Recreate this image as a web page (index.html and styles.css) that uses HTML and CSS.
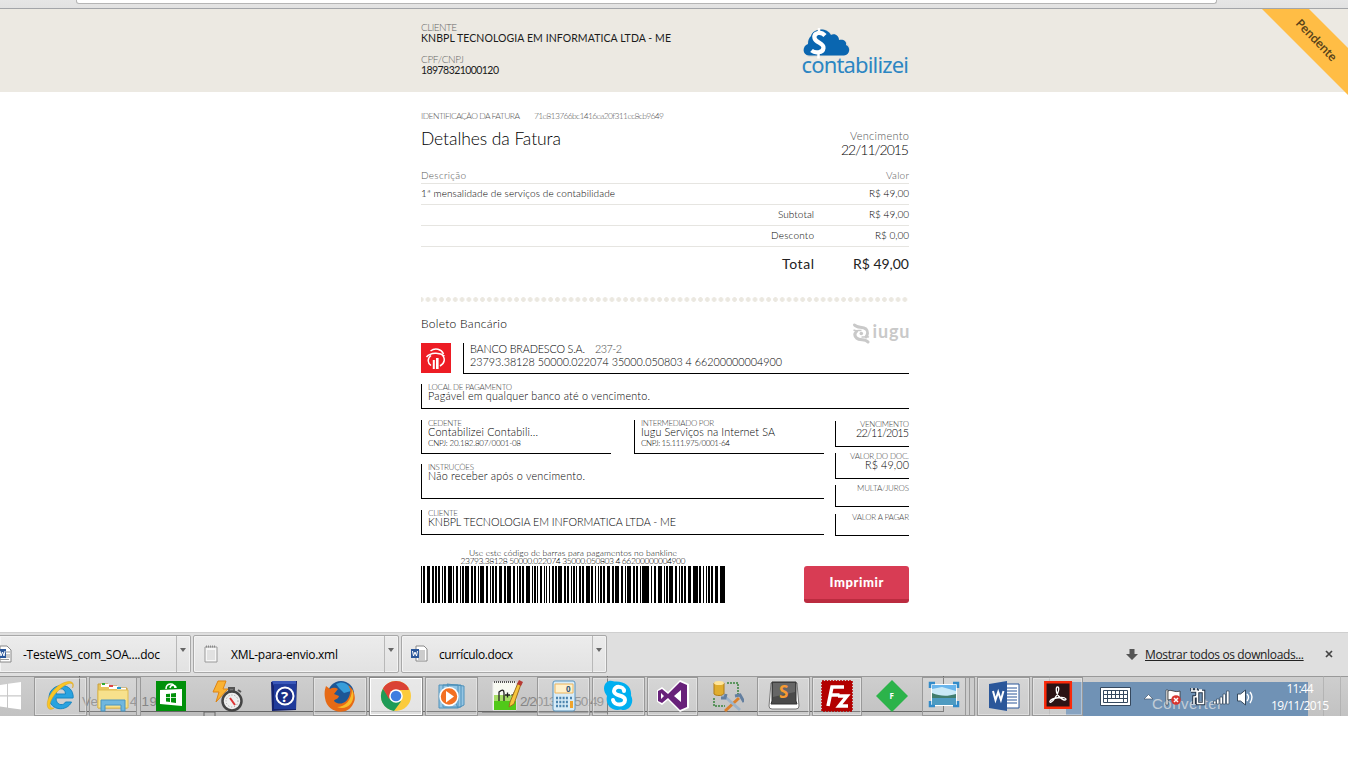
FILE: index.html
```html
<!DOCTYPE html>
<html lang="pt-BR">
<head>
<meta charset="utf-8">
<title>Fatura</title>
<link rel="stylesheet" href="styles.css">
</head>
<body>
<div class="screen">
  <div class="chrome-top"><div class="address"></div></div>

  <header class="head">
    <div class="col head-row">
      <div>
        <div class="line11 lab"><span class="fit" data-w="36">CLIENTE</span></div>
        <div class="line11 val"><span class="fit" data-w="250">KNBPL TECNOLOGIA EM INFORMATICA LTDA - ME</span></div>
        <div class="line11 lab gap"><span class="fit" data-w="43">CPF/CNPJ</span></div>
        <div class="line11 val"><span class="fit" data-w="78">18978321000120</span></div>
      </div>
      <svg class="brand" width="112" height="54" viewBox="800 25 112 54">
        <path d="M809 57a6 6 0 0 1-1-11a9 8 0 0 1 3-9c2-9 15-11 20-3c4-1 8 2 8 6c5-1 8 1 8 4c4 2 4 10-2 11z" fill="#cfcfcb" opacity=".6"/>
        <path d="M809 55.500C802 55 802 46 808 44C808 40 809 38 811 36C813 28 827 27 831 35C835 33 839 36 839 40C843 39 847 41 846 45C851 47 850 55 844 55.500Z" fill="#0a66b0"/>
        <path d="M825 35.500C821 31 813.500 32.500 814.500 38C815.500 43 824 42.500 823.500 48C823 53 815 53.500 811.500 50.500" fill="none" stroke="#fff" stroke-width="4.200"/>
        <path d="M819 28v5M818.500 52v6.500" stroke="#fff" stroke-width="2.500"/>
        <text x="801.500" y="73" textLength="107.500" class="brandname">contabilizei</text>
      </svg>
    </div>
    <svg class="ribbon" width="90" height="88" viewBox="1260 9 90 88">
      <path d="M1262 9H1309L1348 48V95Z" fill="#ffbd45"/>
      <text x="0" y="0" textLength="53" transform="translate(1295 24) rotate(46)" class="ribtext">Pendente</text>
    </svg>
  </header>

  <main class="col">
    <div class="ident"><span class="fit" data-w="99">IDENTIFICAÇÃO DA FATURA</span><span class="fit" data-w="130">71e813766bc1416ea20f311ec8cb9649</span></div>
    <div class="title-row">
      <h1><span class="fit" data-w="140">Detalhes da Fatura</span></h1>
      <div class="due"><div class="muted"><span class="fit" data-w="59">Vencimento</span></div><div class="due-date"><span class="fit" data-w="68">22/11/2015</span></div></div>
    </div>

    <div class="items">
      <div class="row first muted"><span class="fit" data-w="45">Descrição</span><b></b><span class="fit" data-w="23">Valor</span></div>
      <div class="row"><span class="fit" data-w="194">1ª mensalidade de serviços de contabilidade</span><b></b><span class="fit" data-w="40">R$ 49,00</span></div>
      <div class="row"><span></span><b><span class="fit" data-w="36">Subtotal</span></b><span class="fit" data-w="40">R$ 49,00</span></div>
      <div class="row"><span></span><b><span class="fit" data-w="43">Desconto</span></b><span class="fit" data-w="34">R$ 0,00</span></div>
      <div class="row total"><span></span><b><span class="fit" data-w="32">Total</span></b><span class="fit" data-w="56">R$ 49,00</span></div>
    </div>
    <div class="dots"></div>

    <div class="slip-head">
      <span class="fit" data-w="86">Boleto Bancário</span>
      <svg width="60" height="24" viewBox="852 320 60 24">
        <g fill="none" stroke="#c9c9c9" stroke-width="3" stroke-linecap="round"><path d="M854.500 324c3 3.500 8 1 11.500 4c2.500 2.500 1.500 6 0 8"/><path d="M868 341c-3-3.500-8-1-11.500-4c-2.500-2.500-1.500-5 0-6.500"/></g>
        <path d="M853.500 329c3 1.500 6 0 8 .5M869 336c-3-1-5 .5-7.500 0" fill="none" stroke="#c9c9c9" stroke-width="1.500"/>
        <circle cx="861.300" cy="332.500" r="1.800" fill="#c9c9c9"/>
        <text x="872.500" y="337" textLength="37" class="iugu">iugu</text>
      </svg>
    </div>

    <div class="bank-row">
      <svg width="30" height="30" viewBox="0 0 30 30"><path fill="#ed1c24" d="M0 0h30v30H0z"/><path d="M9.500 8C14 4.500 20.500 6 22.500 11M5.500 14c4-4.500 13-5 18-1M20 11c5 4 4 9-1 12M10 12.500C6 15.500 6.500 20 10 22.500" fill="none" stroke="#fff" stroke-width="1.500"/><path d="M11.800 17h2v9h-2zM15 15h2.600v11H15z" fill="#fff"/></svg>
      <div class="box bank">
        <div class="t bl"><span class="fit" data-w="115">BANCO BRADESCO S.A.</span><span class="fit grey" data-w="27">237-2</span></div>
        <div class="t bl"><span class="fit" data-w="312">23793.38128 50000.022074 35000.050803 4 66200000004900</span></div>
      </div>
    </div>

    <div class="box place"><div class="l"><span class="fit" data-w="84">LOCAL DE PAGAMENTO</span></div><div class="t"><span class="fit" data-w="222">Pagável em qualquer banco até o vencimento.</span></div></div>

    <div class="slip">
      <div class="slip-left">
        <div class="pair">
          <div class="box"><div class="l"><span class="fit" data-w="34">CEDENTE</span></div><div class="t"><span class="fit" data-w="110">Contabilizei Contabili...</span></div><div class="s"><span class="fit" data-w="93">CNPJ: 20.182.807/0001-08</span></div></div>
          <div class="box"><div class="l"><span class="fit" data-w="73">INTERMEDIADO POR</span></div><div class="t"><span class="fit" data-w="134">Iugu Serviços na Internet SA</span></div><div class="s"><span class="fit" data-w="89">CNPJ: 15.111.975/0001-64</span></div></div>
        </div>
        <div class="box instr"><div class="l"><span class="fit" data-w="46">INSTRUÇÕES</span></div><div class="t"><span class="fit" data-w="157">Não receber após o vencimento.</span></div></div>
        <div class="box client"><div class="l"><span class="fit" data-w="30">CLIENTE</span></div><div class="t"><span class="fit" data-w="248">KNBPL TECNOLOGIA EM INFORMATICA LTDA - ME</span></div></div>
      </div>
      <div class="slip-right">
        <div class="box r"><div class="l"><span class="fit" data-w="49">VENCIMENTO</span></div><div class="t"><span class="fit" data-w="53">22/11/2015</span></div></div>
        <div class="box r"><div class="l"><span class="fit" data-w="59">VALOR DO DOC.</span></div><div class="t"><span class="fit" data-w="44">R$ 49,00</span></div></div>
        <div class="box r low"><div class="l"><span class="fit" data-w="52">MULTA/JUROS</span></div></div>
        <div class="box r low2"><div class="l"><span class="fit" data-w="57">VALOR A PAGAR</span></div></div>
      </div>
    </div>

    <div class="pay">
      <div class="bars">
        <div class="cap"><span class="fit" data-w="208">Use este código de barras para pagamentos no bankline</span></div>
        <div class="cap"><span class="fit" data-w="225">23793.38128 50000.022074 35000.050803 4 66200000004900</span></div>
        <svg id="barcode" width="304" height="37" shape-rendering="crispEdges"></svg>
      </div>
      <button class="print"><span class="fit" data-w="54">Imprimir</span></button>
    </div>
  </main>

  <div class="downloads">
    <div class="dl d1"><svg width="12" height="18" viewBox="0 0 12 18"><path d="M0 1h7l4 4v12H0z" fill="#fff" stroke="#888"/><path d="M5 7h5M5 10h5M5 12h5M0 14.500h9" stroke="#999"/><path fill="#2b579a" d="M0 4h6v9H0z"/><path d="M0 6l1 5l1.500-4l1.500 4l1-5" stroke="#fff" fill="none"/></svg><span class="fit" data-w="137">-TesteWS_com_SOA....doc</span><i></i></div>
    <div class="dl d2"><svg width="14" height="18" viewBox="0 0 14 18"><path d="M1 2h12v15H1z" fill="#f6f6f6" stroke="#999"/><path d="M2 1.500h10" stroke="#888" stroke-dasharray="1 1" stroke-width="2"/><path d="M3 6h8M3 8h8M3 10h8M3 12h8M3 14h8" stroke="#ccc"/></svg><span class="fit" data-w="107">XML-para-envio.xml</span><i></i></div>
    <div class="dl d3"><svg width="17" height="18" viewBox="0 0 17 18"><path d="M6 1h7l3 3v12H5V1z" fill="#fff" stroke="#888"/><path d="M8 6h6M8 8h6M8 10h6M8 12h6M7 14h7" stroke="#999"/><path fill="#2b579a" d="M0 4h8v9H0z"/><path d="M1.500 6l1 5l1.500-4l1.500 4l1-5" stroke="#fff" fill="none"/></svg><span class="fit" data-w="74">currículo.docx</span><i></i></div>
    <div class="dl-right"><svg width="12" height="13" viewBox="0 0 12 13"><path d="M3.500 1h5v5H12L6 12L0 6h3.500z" fill="#555"/></svg><a class="fit" data-w="159">Mostrar todos os downloads...</a><svg class="close" width="8" height="8" viewBox="0 0 8 8"><path d="M1 1l6 6M7 1L1 7" stroke="#444" stroke-width="1.700"/></svg></div>
  </div>

  <div class="taskbar">
    <svg class="ghost" width="1348" height="40" viewBox="0 676 1348 40">
      <path d="M79 712h529v4H79z" fill="#bdbdbd"/>
      <path d="M79.500 676v35M79 711.500H944M607.500 676v40M204 712h11v5h-11zM482 712h126M943.500 676v35" stroke="#666" fill="none"/>
      <path fill="#7092b5" d="M1066 682h242v34h-242z"/>
      <path d="M1049.500 676v40M1323.500 676v40M1340.500 676v40" stroke="#aaa" stroke-width=".7"/>
      <text x="82" y="706" textLength="75" class="gt">Ver. 11.4.19</text>
      <text x="520" y="706" textLength="84" class="gt">2/2013 10:50:49</text>
      <text x="1152" y="709" textLength="70" class="gc">Converter</text>
    </svg>
    <div class="cells">
      <div class="c"><svg class="win" viewBox="0 0 32 32"><path fill="#fff" d="M0 5l7-1V15.300H0zM8 3.800L21 2v13.300H8zM0 16.500h7v11L0 26.500zM8 16.500h13v13L8 27.700z"/></svg></div>
      <div class="c f"><svg viewBox="0 0 32 32"><path d="M26.500 22C22 32 5 31 4 18C4 3 26 1 28 15c.3 1 .1 3 .1 3H11c0 8 8 8 9.500 4zM11 14h9.500c0-7-9-7-9.500 0z" fill="#29a3e0" stroke="#1785c2" fill-rule="evenodd"/><path d="M27.500 8C32-2 16 0 7 12C-1 23 2 33 9 28c-7 1-4-8 2-15C19 4 30-1 27.500 8z" fill="#f9c627" stroke="#dba018" stroke-width=".5"/></svg></div>
      <div class="c f dbl"><svg viewBox="0 0 32 32"><path d="M1 5V4h10l1 2h8l1 2h9v20H1z" fill="#e8c55c" stroke="#c9a03f"/><path fill="#fff" d="M4 4h8v3H4zm8 2h9v3h-9zm8 2h9v3h-9z"/><path d="M5 3h3v2H5z" fill="#3a3"/><path d="M12 5h4v2h-4z" fill="#d44"/><path d="M20 7h4v2h-4z" fill="#29c"/><path fill="#f7e18c" stroke="#dfbb50" d="M1 10h30v18H1z"/><path fill="#70b7de" stroke="#4b94c0" d="M4 31V20h24v11h-4v-6H8v6z"/></svg></div>
      <div class="c"><svg viewBox="0 0 32 32"><path fill="#00900a" d="M1 1h30v30H1z"/><path fill="#fff" d="M5 10l22-1v17L5 24z"/><path d="M11 9c0-6 8-7 9-1M15 8c1-4 6-3 6 0" fill="none" stroke="#fff" stroke-width="1.500"/><path fill="#00900a" d="M11 14l4-.3v3.500h-4zm5-.5l5-.5v4.200h-5zM11 18h4v4l-4-.4zm5 0h5v5l-5-.7z"/></svg></div>
      <div class="c"><svg viewBox="0 0 32 32"><path d="M6 1h8L11 9h5L4 22L7 12H1z" fill="#f9b233" stroke="#de8413"/><path d="M17 8h5v4h-5zM26 10l3 2" fill="#777" stroke="#555" stroke-width="2"/><circle cx="20" cy="21" r="9.500" fill="#eee" stroke="#444" stroke-width="2.500"/><circle cx="20" cy="21" r="6" fill="none" stroke="#999" stroke-dasharray="1 2"/><path d="M18 18l5 7" stroke="#d33" stroke-width="2"/></svg></div>
      <div class="c"><svg viewBox="0 0 32 32"><path fill="#14226f" d="M3 2l4-1h22l-1 29-24 1z"/><path fill="#3957b9" d="M4 1h24v4L6 6z"/><path fill="#203b9b" d="M6 4h22v25H6z"/><circle cx="17" cy="16" r="8.500" fill="#192c84" stroke="#fff" stroke-width="2"/><text x="13" y="21.500" class="q">?</text></svg></div>
      <div class="c f"><svg viewBox="0 0 32 32"><circle cx="17" cy="14" r="13" fill="#1d5796"/><path d="M12 4c7-4 14 0 15 7l-7 2-5-5z" fill="#369dda"/><path d="M2 6l4 3c3-2 6-1 8 0l-4 5 5 2c-1 4-5 3-5 5c6 6 15 1 16-8c1-3-1-6-2-8c6 4 9 13 5 19C24 36 3 34 1 18C0 13 1 9 2 6z" fill="#e66a16"/><path d="M28 9c5 12-4 22-15 18c8 0 15-7 15-18z" fill="#f9bb29"/></svg></div>
      <div class="c f active"><svg viewBox="0 0 32 32"><circle cx="16" cy="16" r="15" fill="#fbcb3c"/><path d="M3 8.500A15 15 0 0 1 29 8.500H16z" fill="#da4235"/><path d="M3 8.500A15 15 0 0 0 14 31L21 21.500 9.500 18z" fill="#1f9b57"/><path d="M3 8.500L9 19l4-9h16A15 15 0 0 0 3 8.500z" fill="#da4235"/><circle cx="16" cy="16" r="6.800" fill="#fff"/><circle cx="16" cy="16" r="5.300" fill="#3f7de0"/></svg></div>
      <div class="c f"><svg viewBox="0 0 32 32"><path fill="#95c5e3" stroke="#4e91ba" d="M11 4l17 2v19l-6 3zM7 5h18v22H7zM3 5h19v23H3z"/><circle cx="13" cy="16.500" r="9" fill="#f37022" stroke="#fff" stroke-width="1.500"/><path d="M10 11l8 5.500-8 6z" fill="#fff"/></svg></div>
      <div class="c"><svg viewBox="0 0 32 32"><path d="M1 2h23v28H1z" fill="#f8faf2" stroke="#eee"/><path fill="#51c919" d="M2 19h22v11H2z"/><path fill="#a6dd65" d="M2 15h22v6H2z"/><path d="M2 2h22" stroke="#555" stroke-width="2" stroke-dasharray="1 1"/><path d="M7 21v-9q5-4 5 1v8M13 15h5m-2.500-2.500v5m4-2.500h5m-2.500-2.500v5" fill="none" stroke="#222" stroke-width="1.300"/><path d="M18 22L26 3l3 1-7 20-5 3z" fill="#f7c53b" stroke="#9c7021"/><path d="M27 0l4 2-2 4-4-2z" fill="#b73a35"/></svg></div>
      <div class="c f"><svg viewBox="0 0 32 32"><rect x="5" y="1" width="22" height="30" rx="2" fill="#d8ecf7" stroke="#5b94bd"/><path fill="#fff1cc" stroke="#edb45c" d="M7 4h18v9H7z"/><text x="18" y="12" class="zero">0</text><path d="M8 18h12M8 22h12M8 26h12M22 18h3" stroke="#4b84ae" stroke-width="2.500" stroke-dasharray="2 1.300"/><path fill="#efa42c" d="M22 21h3v7h-3z"/></svg></div>
      <div class="c f"><svg viewBox="0 0 32 32"><path d="M4 2c4-3 7 0 9-.500c10 0 16 6 15 14c4 7-2 17-10 14C8 32 2 24 4 16C0 11 0 5 4 2z" fill="#00aff0"/><path d="M21 11c0-5-10-6-10 0c0 6 11 3 11 9c0 6-11 6-12 0" fill="none" stroke="#fff" stroke-width="4" stroke-linecap="round"/></svg></div>
      <div class="c f"><svg viewBox="0 0 32 32"><path d="M23 0l9 4v24l-9 4L11 20l-6 5-6-4V11l6-4 6 5z" fill="#fff"/><path d="M23 2l7 3v22l-7 3-12-12-6 5-4-2V11l4-2 6 5zM24 10l-7 6 7 6zM4 13v6l3-3z" fill="#68217a" fill-rule="evenodd"/></svg></div>
      <div class="c"><svg viewBox="0 0 32 32"><path d="M2 3v11c2 2 8 2 10 0V3z" fill="#e0ad2e" stroke="#ad7b18"/><ellipse cx="7" cy="3" rx="5" ry="2" fill="#ffe59a"/><path d="M15 3h11v11M2 18v8h11" fill="none" stroke="#39843d" stroke-width="1.500" stroke-dasharray="2 1"/><path d="M13 31L27 18" stroke="#da812d" stroke-width="3"/><path d="M11 15l17 15" stroke="#9db3c9" stroke-width="3"/><path d="M23 16l5-1 4 7M9 18l4 0 1-4" fill="none" stroke="#637fa0" stroke-width="3"/></svg></div>
      <div class="c f"><svg viewBox="0 0 32 32"><path fill="#fff" stroke="#777" d="M3 3h26l2 23q0 3-3 3H4q-3 0-3-3z"/><path fill="#4a4a4a" stroke="#333" d="M4 2h24v19l1 3H3l1-3z"/><path fill="#666" d="M5 3h22v9L5 17z"/><text x="11" y="18" class="sub">S</text></svg></div>
      <div class="c f"><svg viewBox="0 0 32 32"><path fill="#b30000" stroke="#b30000" stroke-dasharray="2 1" stroke-width="1.500" d="M1 1h30v30H1z"/><path d="M7 26L11 7h12M9.500 15h9M17 16h9l-8 10h9" fill="none" stroke="#fff" stroke-width="3.500"/></svg></div>
      <div class="c"><svg viewBox="0 0 32 32"><path fill="#2cb34a" d="M16 0l16 16-16 16L0 16z"/><text x="13.500" y="19" class="ef">F</text></svg></div>
      <div class="c f stack"><svg viewBox="0 0 32 32"><path fill="#fff" d="M3 4h26v22H3z"/><path fill="#69b5ec" d="M4 5h24v20H4z"/><path fill="#c9e9f7" d="M4 9l10-2 14 4v5H4z"/><path fill="#417d6d" d="M4 13c8 3 14 4 24 1v5H4z"/><path fill="#4e9bc1" d="M4 18h24v7H4z"/><path d="M2 8V3h5M25 3h5v5M30 21v5h-5M7 26H2v-5" fill="none" stroke="#328bc9" stroke-width="2.500"/></svg></div>
      <div class="c f"><svg viewBox="0 0 32 32"><path fill="#fff" stroke="#2b579a" d="M17 4h14v24H17z"/><path d="M19 8h10M19 11h10M19 14h10M19 17h10M19 20h10M19 23h10" stroke="#2b579a" stroke-width="1.200"/><path fill="#2b579a" d="M1 4l18-3v30L1 28z"/><path d="M5 11l2.500 9 2.700-8 2.700 8L15.500 11" fill="none" stroke="#fff" stroke-width="2"/></svg></div>
      <div class="c f"><svg viewBox="0 0 32 32"><path fill="#2b1315" stroke="#fa2a0b" stroke-width="2.500" d="M3.300 2.300h25.500v25.500H3.300z"/><path d="M15 7c3-1 2 6-2 11c-3 5-6 5-5 3c2-3 14-5 16-2c0 3-8-1-9.500-7C14 9 14 8 15 7z" fill="none" stroke="#fff" stroke-width="1.300"/></svg></div>
    </div>
    <svg class="tray" width="160" height="40" viewBox="1098 676 160 40">
      <path fill="#fff" stroke="#35485e" d="M1100.500 687.500h30v18h-30z"/><path fill="#fff" stroke="#35485e" d="M1103.500 690.500h24v12h-24zM1103.500 694.500h24M1103.500 698.500h24M1107.500 690v8M1111.500 690v8M1115.500 690v8M1119.500 690v8M1123.500 690v8M1107.500 698v4M1123.500 698v4"/>
      <path fill="#fff" stroke="#40546c" stroke-width=".7" d="M1144 699l4.500-4.500L1153 699z"/>
      <path d="M1166 690h2v15h-2z" fill="#fff" stroke="#333" stroke-width=".6"/><path d="M1168 691c4-2 6 2 12 0v9c-5 2-7-2-12 0z" fill="#fff" stroke="#333" stroke-width=".8"/><circle cx="1176" cy="700" r="4.800" fill="#d8352f"/><path d="M1174 698l4 4m0-4l-4 4" stroke="#fff" stroke-width="1.500"/>
      <g fill="none" stroke="#243447" stroke-width="3.500"><path d="M1191 691h6v4q0 2-3 2v7M1192 688v3M1196 688v3M1197.500 691.500h6v12h-6z"/></g><g fill="none" stroke="#fff" stroke-width="1.500"><path d="M1191 691h6v4q0 2-3 2v7M1192 688v3M1196 688v3M1197.500 691.500h6v12h-6zM1199 690h3"/></g>
      <path fill="#fff" stroke="#34485c" stroke-width=".7" d="M1213.500 701h2.500v3h-2.500zm3-2h2.500v5h-2.500zm3.500-2h2.500v7h-2.500zm3-3h2.500v10h-2.500zm3.500-3h2.500v13h-2.500z"/>
      <path d="M1237.500 694h3l5-4v15l-5-4h-3z" fill="#fff" stroke="#34485c"/><path d="M1247 694q3 3 0 7M1250 692q4 5 0 11" fill="none" stroke="#fff" stroke-width="1.400"/>
    </svg>
    <div class="clock"><div><span class="fit" data-w="27">11:44</span></div><div><span class="fit" data-w="58">19/11/2015</span></div></div>
  </div>
</div>
<script src="page.js"></script>
</body>
</html>
```
FILE: styles.css
```css
* { box-sizing: border-box; }
body { margin: 0; background: #fff; overflow: hidden; font-family: Lato, "Open Sans", sans-serif; color: #000; }
.screen { width: 1348px; height: 768px; display: flex; flex-direction: column; }
.fit { white-space: nowrap; }

.chrome-top { height: 9px; background: linear-gradient(#e6e6e6, #e2e2e2); border-bottom: 1px solid #a3a5a9; }
.address { margin-left: 76px; width: 1141px; height: 4px; background: #fff; border: 1px solid #b5b5b5; border-top: 0; border-radius: 0 0 3px 3px; }

.col { width: 488px; margin-left: 421px; }
.head { height: 83px; background: #ece9e2; position: relative; }
.head-row { display: flex; justify-content: space-between; padding-top: 13px; }
.line11 { font-size: 10.500px; line-height: 11px; height: 11px; }
.val { color: #1a1a1a; }
.lab { color: #666; font-size: 10px; font-weight: 300; }
.gap { margin-top: 10px; }
.brand { margin: 3px -3px 0 0; }
.brandname { font: 22px "Noto Sans", sans-serif; fill: #2c86c2; }
.ribbon { position: absolute; right: -2px; top: 0; }
.ribtext { font: 600 12px "Open Sans", sans-serif; fill: #574219; }

.ident { padding-top: 19px; font-size: 8.500px; line-height: 10px; color: #555; font-weight: 300; display: flex; gap: 14px; }
.title-row { margin-top: 8px; height: 39px; display: flex; justify-content: space-between; }
h1 { margin: 0; font-size: 17.500px; line-height: 20px; font-weight: 300; }
.due { text-align: right; line-height: 14px; font-size: 11px; }
.due-date { font-size: 14px; font-weight: 300; }
.muted { color: #555; font-weight: 300; }
.items { font-size: 10px; }
.row { display: grid; grid-template-columns: 1fr 100px 95px; height: 21px; line-height: 18px; border-bottom: 1px solid #e6e5e1; font-weight: 300; }
.row b { text-align: right; font-weight: inherit; }
.row > span { justify-self: start; }
.row > span:last-child { justify-self: end; }
.row.first { height: 16px; line-height: 15px; }
.row.total { height: 50px; line-height: 34px; font-size: 14px; border: 0; font-weight: 400; color: #222; }
.dots { height: 5px; background: radial-gradient(circle, #ebe8e0 2px, transparent 2.700px) 3.600px 0 / 6.820px 5px repeat-x; }

.slip-head { height: 41px; padding-top: 15px; font-size: 12px; line-height: 14px; font-weight: 300; display: flex; justify-content: space-between; }
.slip-head svg { margin: 4px -3px 0 0; }
.iugu { font: bold 18px Lato, sans-serif; fill: #c9c9c9; }
.bank-row { display: flex; gap: 12px; height: 31px; }
.box { border-left: 1px solid #000; border-bottom: 1px solid #000; padding-left: 6px; }
.bank { flex: 1; }
.grey { color: #444; margin-left: 10px; }
.l { font-size: 8px; line-height: 6px; color: #444; font-weight: 300; }
.t { font-size: 10.800px; line-height: 13px; margin-top: -1px; font-weight: 300; }
.s { font-size: 8px; line-height: 8px; margin-top: 1px; font-weight: 300; }
.t.bl { line-height: 13px; margin-top: 0; position: relative; top: -1px; }
.place { margin-top: 10px; height: 25px; }
.slip { display: flex; gap: 11px; margin-top: 11px; }
.slip-left { width: 403px; display: flex; flex-direction: column; }
.pair { display: grid; grid-template-columns: 190px 190px; gap: 23px; height: 34px; }
.instr { margin-top: 10px; height: 35px; }
.client { margin-top: 11px; height: 25px; }
.slip-right { width: 74px; padding-top: 1px; display: flex; flex-direction: column; gap: 6px; }
.r { height: 26px; text-align: right; padding-left: 0; }
.low { height: 22px; }
.low2 { height: 22px; margin-top: 1px; }
.pay { display: flex; justify-content: space-between; align-items: flex-end; margin-top: 12px; height: 55px; }
.bars { width: 304px; text-align: center; font-size: 8.500px; font-weight: 300; }
.cap { line-height: 8px; height: 8px; }
.bars svg { display: block; margin-top: 1px; }
.print { width: 105px; height: 37px; padding: 0 0 2px; border: 0; border-bottom: 4px solid #bb2b3f; border-radius: 3px; background: #d83c54; color: #fff; font: 900 13px Lato, sans-serif; }

.downloads { margin-top: 29px; height: 44px; background: #dfdfdf; border-top: 1px solid #cfcfcf; padding-top: 2px; display: flex; font: 12px "Open Sans", sans-serif; }
.dl { height: 38px; border: 1px solid #a8a8a8; border-radius: 2px; background: linear-gradient(#ececec, #e2e2e2); box-shadow: inset 0 0 0 1px #f3f3f3; display: flex; align-items: center; }
.dl i { margin-left: auto; width: 14px; height: 36px; border-left: 1px solid #b8b8b8; padding: 12px 0 0 3px; }
.dl i::before { content: ""; display: block; width: 0; border: 3px solid transparent; border-top: 4px solid #666; border-bottom: 0; }
.d1 { width: 191px; border-left: 0; border-radius: 0 2px 2px 0; }
.d1 .fit { margin-left: 11px; }
.d2 { width: 206px; margin-left: 2px; padding-left: 10px; }
.d2 .fit { margin-left: 13px; }
.d3 { width: 206px; margin-left: 2px; padding-left: 9px; }
.d3 .fit { margin-left: 11px; }
.dl-right { margin-left: auto; display: flex; align-items: center; height: 38px; padding-right: 15px; }
.dl-right a { margin-left: 7px; text-decoration: underline; color: #222; }
.close { margin-left: 21px; }

.taskbar { height: 40px; position: relative; background: linear-gradient(#cecece, #c2c2c2); display: flex; border-top: 1px solid #999; }
.ghost { position: absolute; left: 0; top: -1px; }
.gt { font: 13.500px "Liberation Sans", sans-serif; fill: #858585; }
.gc { font: 15px "Liberation Sans", sans-serif; fill: #c3cdd7; }
.cells { position: relative; display: grid; grid-template-columns: 34px 55px 54px 57px 57px 56px 56px 56px 55px 57px 55px 55px 53px 57px 55px 52px 58px 55px 55px 53px; width: 1085px; flex: none; }
.c { display: flex; justify-content: center; padding-top: 3px; height: 39px; margin-right: 2px; }
.c svg { width: 32px; height: 32px; flex: none; }
.c:first-child { justify-content: flex-start; }
.f { border: 1px solid #999; box-shadow: inset 0 0 0 1px rgba(255,255,255,.35); background: rgba(255,255,255,.16); padding-top: 2px; }
.active { background: rgba(255,255,255,.55); border-color: #888; box-shadow: inset 0 0 0 1px #fff; }
.dbl { padding-right: 5px; box-shadow: inset -4px 0 0 -1px #ccc, inset -5px 0 0 -1px #999; }
.stack { padding-right: 9px; box-shadow: inset -4px 0 0 #ccc, inset -5px 0 0 #999, inset -8px 0 0 #ccc, inset -9px 0 0 #999; }
.q { font: bold 15px "Open Sans", sans-serif; fill: #fff; }
.zero { font: bold 8px "Open Sans", sans-serif; fill: #357; }
.sub { font: bold 17px "Open Sans", sans-serif; fill: #f79a32; }
.ef { font: bold 8px "Open Sans", sans-serif; fill: #fff; }
.tray { position: relative; margin: -1px 0 0 13px; flex: none; }
.clock { position: relative; margin-left: 11px; width: 62px; padding-top: 3px; text-align: center; color: #fff; font: 12px/17px "Open Sans", sans-serif; }
```
FILE: page.js
```js
// Tracks each label to its set width
document.querySelectorAll('.fit').forEach(function (el) {
  el.style.display = 'inline-block';
  var n = el.textContent.length;
  var sp = (parseFloat(el.dataset.w) - el.getBoundingClientRect().width) / (n - 1);
  el.style.letterSpacing = sp + 'px';
  el.style.marginRight = -sp + 'px';
});

// Interleaved 2 of 5 bars, wide to narrow 3:1, 0.75px per module
var digits = '23794662000000049003381250000022073500005080';
var codes = ['00110', '10001', '01001', '11000', '00101', '10100', '01100', '00011', '10010', '01010'];
var widths = [1, 1, 1, 1];
for (var i = 0; i < digits.length; i += 2) {
  for (var k = 0; k < 5; k++) {
    widths.push(codes[+digits[i]][k] === '1' ? 3 : 1);
    widths.push(codes[+digits[i + 1]][k] === '1' ? 3 : 1);
  }
}
widths.push(3, 1, 1);
var x = 0, d = '';
widths.forEach(function (w, idx) {
  if (idx % 2 === 0) {
    var a = Math.round(x * 0.75), b = Math.ceil((x + w) * 0.75);
    d += 'M' + a + ' 0H' + b + 'V37H' + a + 'z';
  }
  x += w;
});
var path = document.createElementNS('http://www.w3.org/2000/svg', 'path');
path.setAttribute('d', d);
document.getElementById('barcode').appendChild(path);
```
